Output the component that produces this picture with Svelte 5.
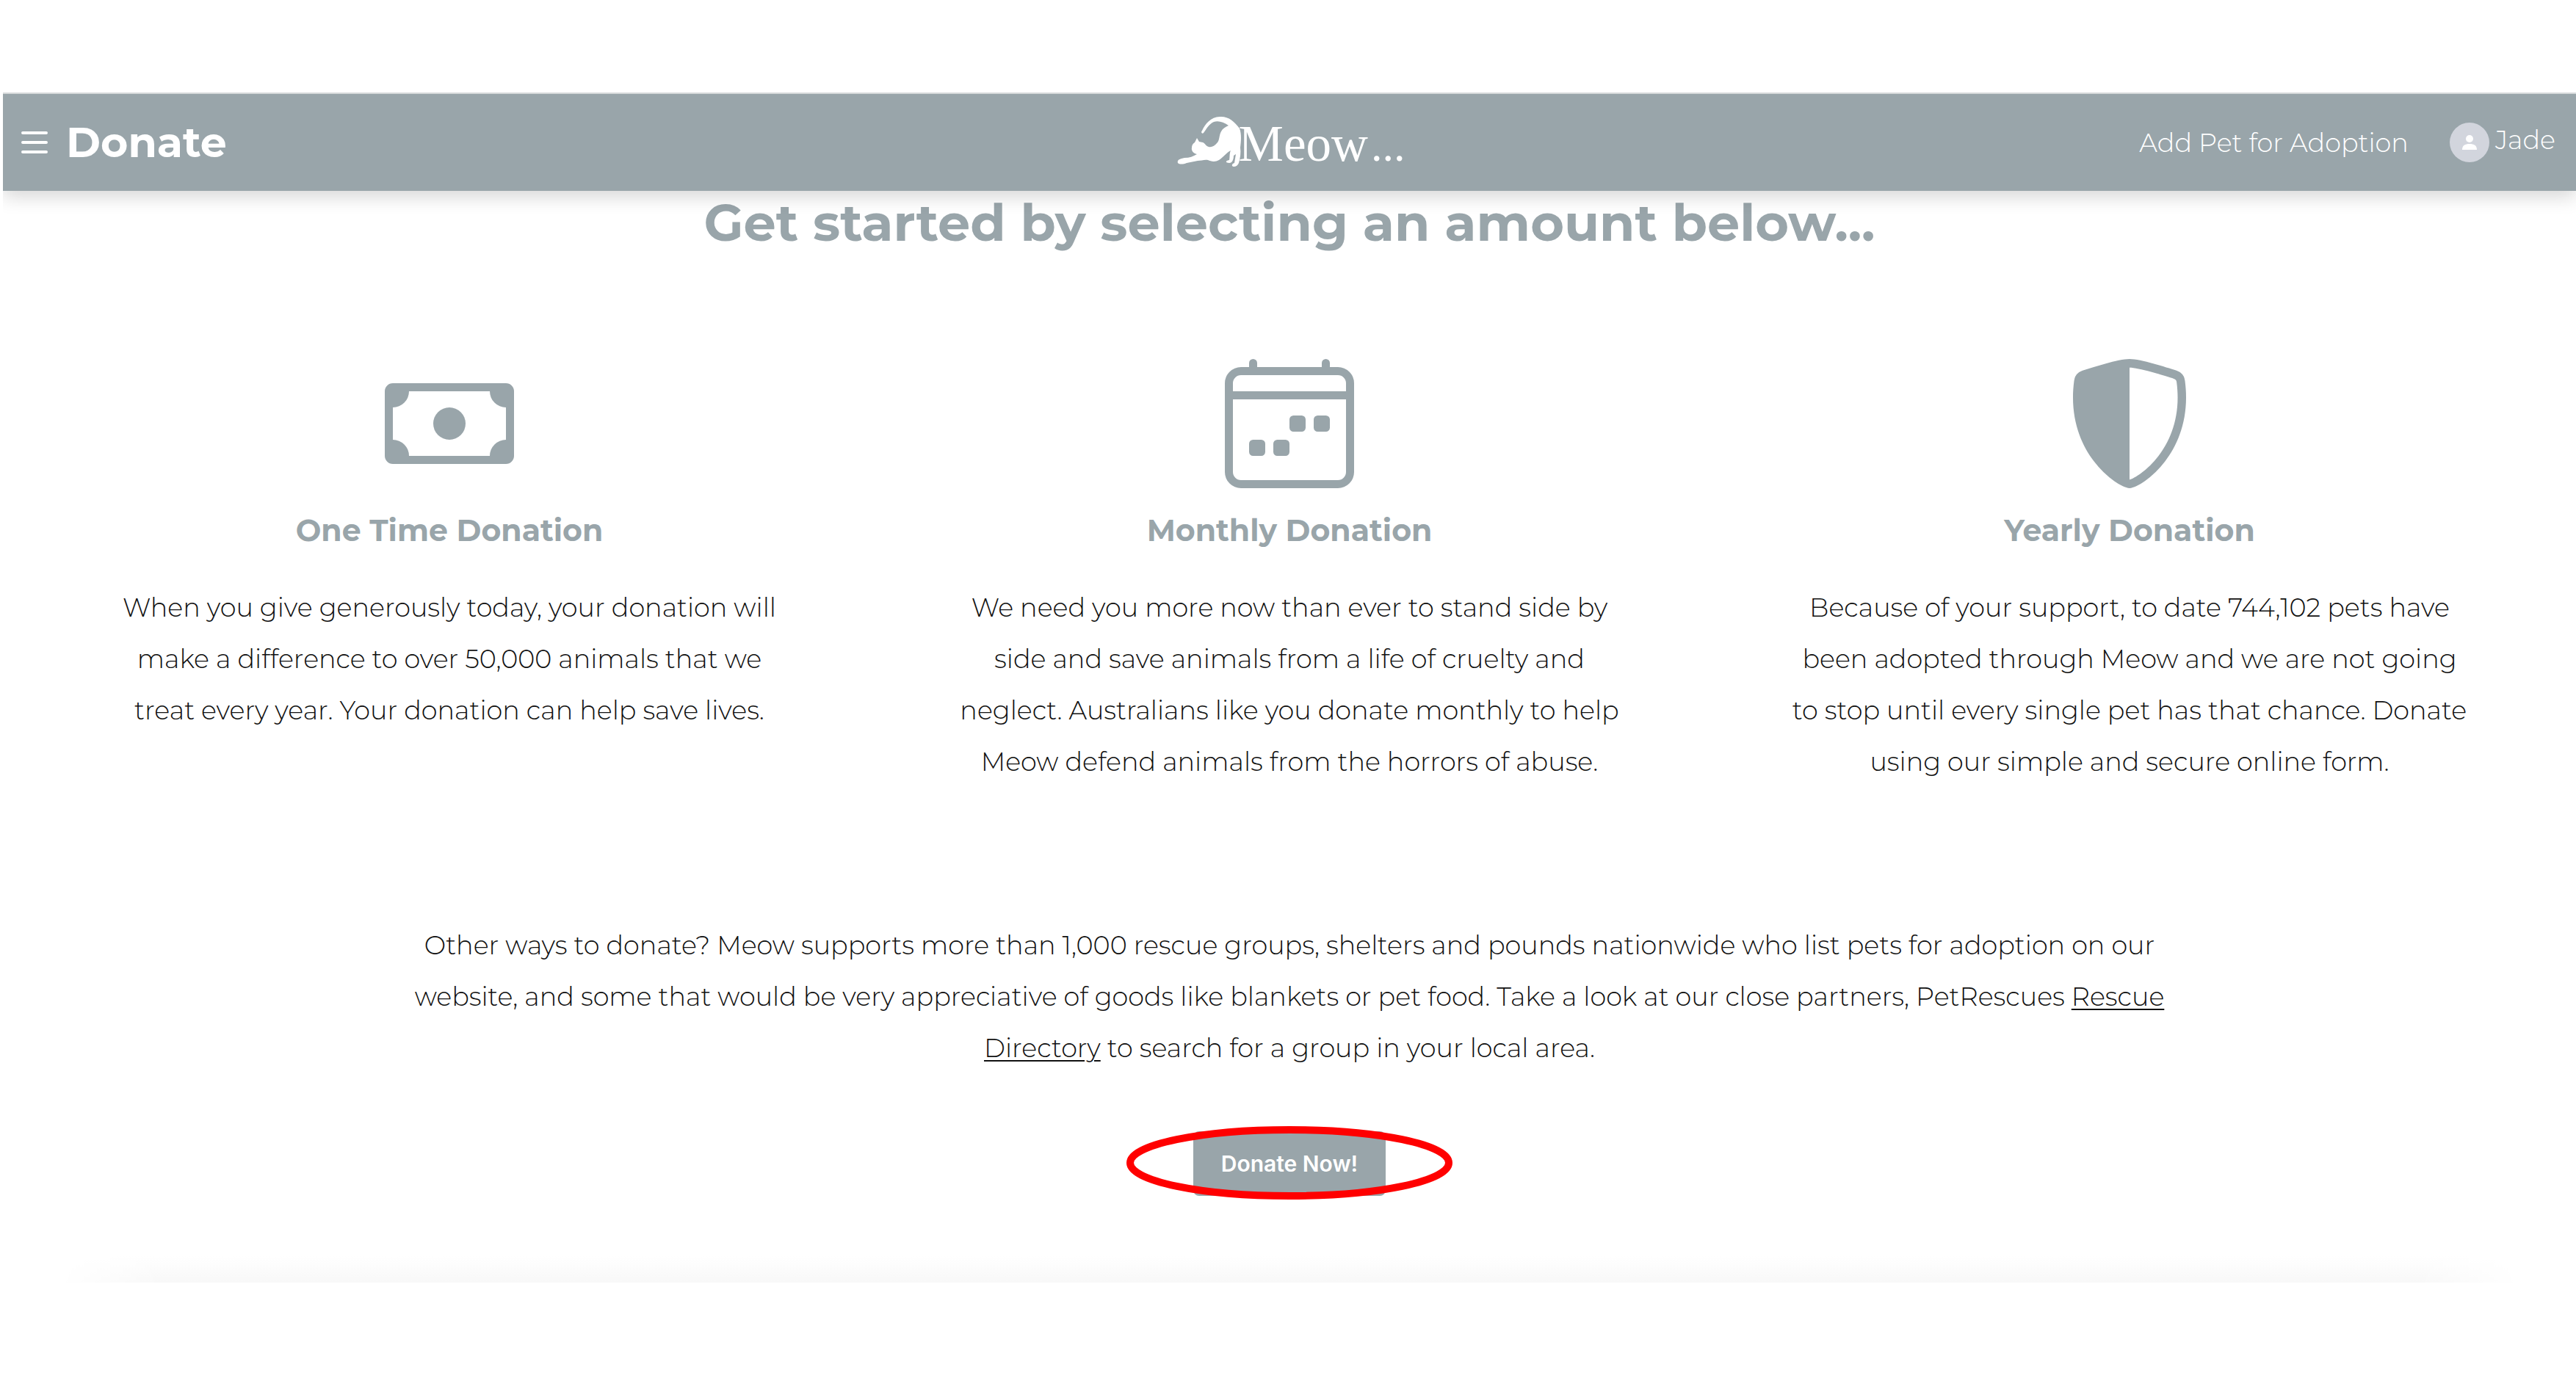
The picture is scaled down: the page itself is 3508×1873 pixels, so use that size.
<script>
  const plans = [
    {
      icon: 'cash',
      title: 'One Time Donation',
      lines: [
        'When you give generously today, your donation will',
        'make a difference to over 50,000 animals that we',
        'treat every year. Your donation can help save lives.'
      ]
    },
    {
      icon: 'calendar',
      title: 'Monthly Donation',
      lines: [
        'We need you more now than ever to stand side by',
        'side and save animals from a life of cruelty and',
        'neglect. Australians like you donate monthly to help',
        'Meow defend animals from the horrors of abuse.'
      ]
    },
    {
      icon: 'shield',
      title: 'Yearly Donation',
      lines: [
        'Because of your support, to date 744,102 pets have',
        'been adopted through Meow and we are not going',
        'to stop until every single pet has that chance. Donate',
        'using our simple and secure online form.'
      ]
    }
  ];

  const icons = {
    cash: [
      'M8 10a2 2 0 1 0 0-4 2 2 0 0 0 0 4z',
      'M0 4a1 1 0 0 1 1-1h14a1 1 0 0 1 1 1v8a1 1 0 0 1-1 1H1a1 1 0 0 1-1-1V4zm3 0a2 2 0 0 1-2 2v4a2 2 0 0 1 2 2h10a2 2 0 0 1 2-2V6a2 2 0 0 1-2-2H3z'
    ],
    calendar: [
      'M3.5 0a.5.5 0 0 1 .5.5V1h8V.5a.5.5 0 0 1 1 0V1h1a2 2 0 0 1 2 2v11a2 2 0 0 1-2 2H2a2 2 0 0 1-2-2V3a2 2 0 0 1 2-2h1V.5a.5.5 0 0 1 .5-.5zM2 2a1 1 0 0 0-1 1v1h14V3a1 1 0 0 0-1-1H2zm13 3H1v9a1 1 0 0 0 1 1h12a1 1 0 0 0 1-1V5z',
      'M11 7.5a.5.5 0 0 1 .5-.5h1a.5.5 0 0 1 .5.5v1a.5.5 0 0 1-.5.5h-1a.5.5 0 0 1-.5-.5v-1zm-3 0a.5.5 0 0 1 .5-.5h1a.5.5 0 0 1 .5.5v1a.5.5 0 0 1-.5.5h-1a.5.5 0 0 1-.5-.5v-1zm-2 3a.5.5 0 0 1 .5-.5h1a.5.5 0 0 1 .5.5v1a.5.5 0 0 1-.5.5h-1a.5.5 0 0 1-.5-.5v-1zm-3 0a.5.5 0 0 1 .5-.5h1a.5.5 0 0 1 .5.5v1a.5.5 0 0 1-.5.5h-1a.5.5 0 0 1-.5-.5v-1z'
    ],
    shield: [
      'M8 14.933a.615.615 0 0 0 .1-.025c.076-.023.174-.061.294-.118.24-.113.547-.29.893-.533a10.726 10.726 0 0 0 2.287-2.233c1.527-1.997 2.807-5.031 2.253-9.188a.48.48 0 0 0-.328-.39c-.651-.213-1.75-.56-2.837-.855C9.552 1.29 8.531 1.067 8 1.067v13.866zM5.072.56C6.157.265 7.31 0 8 0s1.843.265 2.928.56c1.11.3 2.229.655 2.887.87a1.54 1.54 0 0 1 1.044 1.262c.596 4.477-.787 7.795-2.465 9.99a11.775 11.775 0 0 1-2.517 2.453 7.159 7.159 0 0 1-1.048.625c-.28.132-.581.24-.829.24s-.548-.108-.829-.24a7.158 7.158 0 0 1-1.048-.625 11.777 11.777 0 0 1-2.517-2.453C1.928 10.487.545 7.169 1.141 2.692A1.54 1.54 0 0 1 2.185 1.43 62.456 62.456 0 0 1 5.072.56z'
    ]
  };
</script>

<div class="page">
  <header>
    <div class="left">
      <button class="menu" aria-label="Open menu">
        <svg viewBox="0 0 38 32" aria-hidden="true">
          <path d="M3 3h32M3 16h32M3 29h32" />
        </svg>
      </button>
      <h1>Donate</h1>
    </div>
    <a class="logo" href="#home">
      <svg viewBox="0 0 90 72" aria-hidden="true">
        <path d="M1 64 C0 61 2 59 6 58 L10 57 C17 57 22 55 27 52 C22 51 19 47 20 43 C20 40 21 38 24 36 L27 30 L30 35 L35 36 C38 37 39 41 43 42 C47 43 51 41 55 36 C58 32 57 26 60 21 C62 17 66 15 70 13 C63 8 56 6 50 8 C43 11 40 18 36 23 C34 25 32 22 34 20 C38 11 46 1 58 1 C69 0 78 7 85 17 C88 25 87 35 86 43 C87 50 86 57 84 64 C83 67 80 69 77 69 C74 69 74 65 78 64 L80 52 L77 54 C77 59 75 64 71 64 C66 64 65 61 71 60 C72 56 71 51 73 47 C67 50 63 56 57 60 C52 63 46 62 42 60 C37 59 33 61 28 61 L13 64 C8 66 3 66 1 64Z" />
      </svg>
      <span class="word">Meow</span><span class="dots">...</span>
    </a>
    <nav>
      <a href="#add-pet">Add Pet for Adoption</a>
      <a class="user" href="#profile">
        <svg viewBox="0 0 54 54" aria-hidden="true">
          <circle cx="27" cy="27" r="27" fill="#d2d5dd" />
          <circle cx="27" cy="22" r="5" fill="#fff" />
          <path d="M17 37c0-6 4-8 10-8s10 2 10 8z" fill="#fff" />
        </svg>
        <span>Jade</span>
      </a>
    </nav>
  </header>

  <main>
    <h2>Get started by selecting an amount below...</h2>

    <section class="plans">
      {#each plans as plan}
        <article>
          <svg viewBox="0 0 16 16" aria-hidden="true">
            {#each icons[plan.icon] as d}
              <path {d} />
            {/each}
          </svg>
          <h3>{plan.title}</h3>
          <p>
            {#each plan.lines as line, i}{#if i}<br />{/if}{line}{/each}
          </p>
        </article>
      {/each}
    </section>

    <p class="other">
      Other ways to donate? Meow supports more than 1,000 rescue groups, shelters and pounds nationwide who list pets for adoption on our<br />
      website, and some that would be very appreciative of goods like blankets or pet food. Take a look at our close partners, PetRescues
      <a href="#directory">Rescue<br />Directory</a> to search for a group in your local area.
    </p>

    <div class="action">
      <button class="donate">Donate Now!</button>
      <svg class="ring" viewBox="0 0 444 100" aria-hidden="true">
        <ellipse cx="222" cy="50" rx="217" ry="45" />
      </svg>
    </div>
    <div class="edge"></div>
  </main>
</div>

<style>
  :global(body) {
    margin: 0;
    background: #fff;
  }
  .page {
    padding: 126px 0 0 4px;
    font-family: Montserrat, Inter, 'Open Sans', sans-serif;
    font-size: 35px;
    font-weight: 300;
    color: #111;
  }
  header {
    display: grid;
    grid-template-columns: 1fr auto 1fr;
    align-items: center;
    height: 132px;
    padding: 0 28px 0 24px;
    border-top: 2px solid #d6d9da;
    background: #99a5aa;
    box-shadow: 0 8px 24px rgba(0, 0, 0, 0.16);
    clip-path: inset(0 0 -40px 0);
    color: #fff;
  }
  header a {
    color: inherit;
    text-decoration: none;
  }
  .left {
    display: flex;
    align-items: center;
    gap: 24px;
  }
  button {
    border: 0;
    font: inherit;
    color: #fff;
    cursor: pointer;
  }
  .menu {
    width: 38px;
    padding: 0;
    background: none;
  }
  .menu svg {
    display: block;
    width: 38px;
    height: 32px;
    fill: none;
    stroke: #fff;
    stroke-width: 4;
    stroke-linecap: round;
  }
  h1 {
    margin: 0;
    font-size: 57px;
    line-height: 68px;
    font-weight: 700;
  }
  .logo {
    display: flex;
    align-items: baseline;
    padding: 12px 0 0 8px;
    font-family: 'Liberation Serif', serif;
    font-weight: 400;
    line-height: 76px;
  }
  .logo svg {
    width: 90px;
    height: 72px;
    margin: 0 -6px 12px 0;
    align-self: center;
    fill: #fff;
  }
  .word {
    font-size: 69px;
  }
  .dots {
    font-size: 62px;
    margin-left: 4px;
  }
  nav {
    display: flex;
    align-items: center;
    justify-content: flex-end;
    gap: 56px;
  }
  .user {
    display: flex;
    align-items: center;
    gap: 8px;
  }
  .user svg {
    width: 54px;
    height: 54px;
  }
  .user span {
    padding-bottom: 8px;
  }
  main {
    text-align: center;
  }
  h2,
  h3 {
    margin: 0;
    font-weight: 700;
    color: #99a5aa;
  }
  h2 {
    font-size: 70px;
    line-height: 86px;
  }
  .plans {
    display: grid;
    grid-template-columns: repeat(3, 1fr);
    padding: 143px 36px 0;
  }
  article svg {
    display: block;
    width: 176px;
    height: 176px;
    margin: 0 auto;
    fill: #99a5aa;
  }
  h3 {
    margin: 31px 0 45px;
    font-size: 41px;
    line-height: 52px;
  }
  p {
    margin: 0;
    line-height: 70px;
  }
  .other {
    margin-top: 180px;
  }
  .other a {
    color: inherit;
    text-underline-offset: 4px;
    text-decoration-thickness: 2px;
  }
  .action {
    position: relative;
    display: flex;
    justify-content: center;
    margin-top: 78px;
  }
  .donate {
    height: 88px;
    padding: 0 38px;
    border-radius: 8px;
    background: #99a5aa;
    font-family: Inter, sans-serif;
    font-size: 30px;
    font-weight: 600;
  }
  .ring {
    position: absolute;
    top: -7px;
    left: 50%;
    width: 444px;
    height: 100px;
    margin-left: -222px;
    fill: none;
    stroke: #f00;
    stroke-width: 10;
    pointer-events: none;
  }
  .edge {
    height: 36px;
    margin: 82px 76px 0;
    background: linear-gradient(#fff, #f8f8f8);
    mask-image: linear-gradient(90deg, transparent, #000 140px calc(100% - 140px), transparent);
  }
</style>
